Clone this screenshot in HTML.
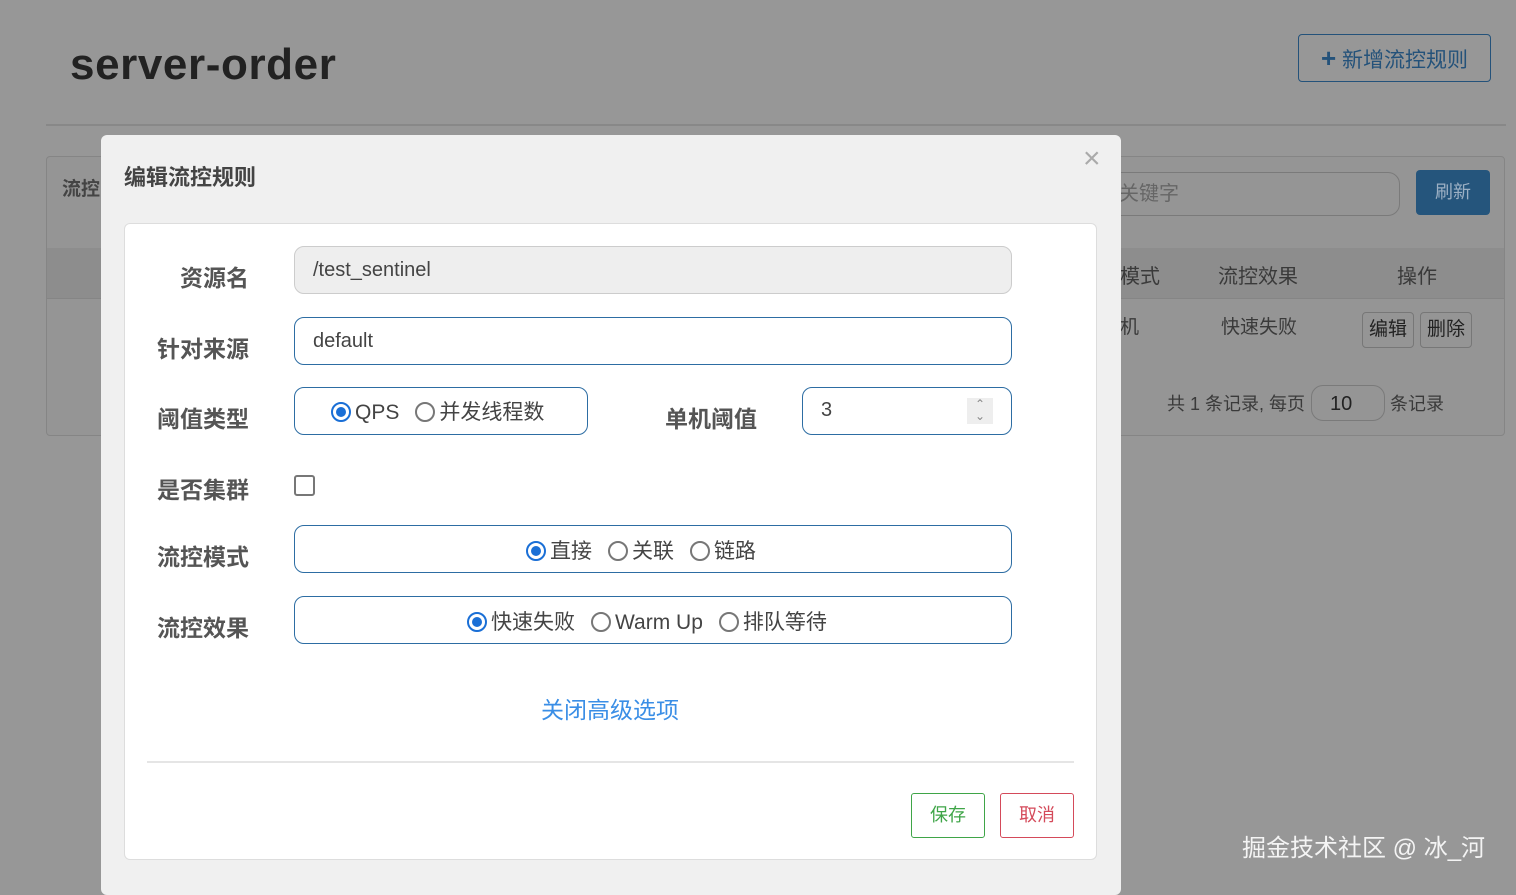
<!DOCTYPE html><html><head><meta charset="utf-8"><style>
body{margin:0;width:1516px;height:883px;background:#979797;font-family:"Liberation Sans","Noto Sans CJK SC",sans-serif;position:relative;overflow:hidden;color:#333}
.a{position:absolute}
.lbl{position:absolute;font-size:23px;font-weight:bold;color:#555}
.box{position:absolute;border:1px solid #2d6da3;border-radius:10px;background:#fff;box-sizing:border-box}
.r{display:inline-block;width:20px;height:20px;border:2px solid #777;border-radius:50%;box-sizing:border-box;vertical-align:-3px;margin-right:4px;position:relative}
.r.on{border:2px solid #1a6fd6}
.r.on:after{content:"";position:absolute;left:3px;top:3px;width:10px;height:10px;border-radius:50%;background:#1a6fd6}
.opt{font-size:21px;color:#444;margin-right:16px}
</style></head><body>
<div class="a" style="left:70px;top:40px;font-size:44px;font-weight:bold;color:#222;letter-spacing:0.6px">server-order</div>
<div class="a" style="left:1298px;top:34px;width:193px;height:48px;border:1px solid #24527a;border-radius:4px;box-sizing:border-box;color:#24527a;font-size:21px;line-height:46px;text-align:center"><b style="font-size:26px">+</b> 新增流控规则</div>
<div class="a" style="left:46px;top:124px;width:1460px;height:2px;background:#888"></div>
<div class="a" style="left:46px;top:156px;width:1459px;height:280px;border:1px solid #858585;border-radius:4px;box-sizing:border-box;background:#959595"></div>
<div class="a" style="left:47px;top:248px;width:1457px;height:50px;background:#8d8d8d;border-bottom:1px solid #858585"></div>
<div class="a" style="left:62px;top:174px;font-size:19px;font-weight:bold;color:#444">流控</div>
<div class="a" style="left:1100px;top:172px;width:300px;height:44px;border:1px solid #7a7a7a;border-radius:12px;box-sizing:border-box;font-size:20px;color:#666;line-height:42px;padding-left:18px">关键字</div>
<div class="a" style="left:1416px;top:170px;width:74px;height:45px;background:#25557c;border-radius:4px;color:#9cb0c4;font-size:18px;line-height:45px;text-align:center">刷新</div>
<div class="a" style="left:1120px;top:260px;font-size:20px;color:#3a3a3a">模式</div>
<div class="a" style="left:1218px;top:260px;font-size:20px;color:#3a3a3a">流控效果</div>
<div class="a" style="left:1397px;top:260px;font-size:20px;color:#3a3a3a">操作</div>
<div class="a" style="left:1120px;top:312px;font-size:19px;color:#3a3a3a">机</div>
<div class="a" style="left:1221px;top:312px;font-size:19px;color:#3a3a3a">快速失败</div>
<div class="a" style="left:1362px;top:312px;width:52px;height:36px;border:1px solid #777;border-radius:4px;box-sizing:border-box;font-size:19px;line-height:34px;text-align:center;color:#222">编辑</div>
<div class="a" style="left:1420px;top:312px;width:52px;height:36px;border:1px solid #777;border-radius:4px;box-sizing:border-box;font-size:19px;line-height:34px;text-align:center;color:#222">删除</div>
<div class="a" style="left:1167px;top:390px;font-size:18px;color:#3a3a3a">共 1 条记录, 每页</div>
<div class="a" style="left:1311px;top:385px;width:74px;height:36px;border:1px solid #7a7a7a;border-radius:12px;box-sizing:border-box;font-size:20px;line-height:36px;padding-left:18px;color:#222">10</div>
<div class="a" style="left:1390px;top:390px;font-size:18px;color:#3a3a3a">条记录</div>
<div class="a" style="left:1242px;top:828px;font-size:24px;color:#f4f4f4">掘金技术社区 @ 冰_河</div>

<div class="a" style="left:101px;top:135px;width:1020px;height:760px;background:#f0f0f0;border-radius:6px"></div>
<div class="a" style="left:124px;top:160px;font-size:22px;font-weight:bold;color:#444">编辑流控规则</div>
<div class="a" style="left:1083px;top:142px;font-size:30px;color:#aaa">×</div>
<div class="a" style="left:124px;top:223px;width:973px;height:637px;background:#fff;border:1px solid #ddd;border-radius:6px;box-sizing:border-box"></div>

<div class="lbl" style="left:180px;top:259px">资源名</div>
<div class="a" style="left:294px;top:246px;width:718px;height:48px;background:#eee;border:1px solid #ccc;border-radius:10px;box-sizing:border-box;font-size:20px;line-height:46px;padding-left:18px;color:#444">/test_sentinel</div>
<div class="lbl" style="left:157px;top:330px">针对来源</div>
<div class="box" style="left:294px;top:317px;width:718px;height:48px;font-size:20px;line-height:46px;padding-left:18px;color:#444">default</div>
<div class="lbl" style="left:157px;top:400px">阈值类型</div>
<div class="box" style="left:294px;top:387px;width:294px;height:48px;line-height:50px;padding-left:36px"><span class="opt"><i class="r on"></i>QPS</span><span class="opt"><i class="r"></i>并发线程数</span></div>
<div class="lbl" style="left:665px;top:400px">单机阈值</div>
<div class="box" style="left:802px;top:387px;width:210px;height:48px;font-size:20px;line-height:44px;padding-left:18px;color:#444">3<span style="position:absolute;right:18px;top:10px;width:26px;height:26px;background:#eee;color:#888;font-size:12px;line-height:12px;text-align:center">⌃<br>⌄</span></div>
<div class="lbl" style="left:157px;top:471px">是否集群</div>
<div class="a" style="left:294px;top:475px;width:21px;height:21px;border:2px solid #777;border-radius:3px;box-sizing:border-box"></div>
<div class="lbl" style="left:157px;top:538px">流控模式</div>
<div class="box" style="left:294px;top:525px;width:718px;height:48px;line-height:51px;padding-left:231px"><span class="opt"><i class="r on"></i>直接</span><span class="opt"><i class="r"></i>关联</span><span class="opt"><i class="r"></i>链路</span></div>
<div class="lbl" style="left:157px;top:609px">流控效果</div>
<div class="box" style="left:294px;top:596px;width:718px;height:48px;line-height:51px;padding-left:172px"><span class="opt"><i class="r on"></i>快速失败</span><span class="opt"><i class="r"></i>Warm Up</span><span class="opt"><i class="r"></i>排队等待</span></div>
<div class="a" style="left:541px;top:691px;font-size:23px;color:#3a8ee6">关闭高级选项</div>
<div class="a" style="left:147px;top:761px;width:927px;height:2px;background:#e5e5e5"></div>
<div class="a" style="left:911px;top:793px;width:74px;height:45px;border:1px solid #3fa548;border-radius:3px;box-sizing:border-box;color:#3fa548;font-size:18px;line-height:43px;text-align:center">保存</div>
<div class="a" style="left:1000px;top:793px;width:74px;height:45px;border:1px solid #d44a5a;border-radius:3px;box-sizing:border-box;color:#d44a5a;font-size:18px;line-height:43px;text-align:center">取消</div>
</body></html>
